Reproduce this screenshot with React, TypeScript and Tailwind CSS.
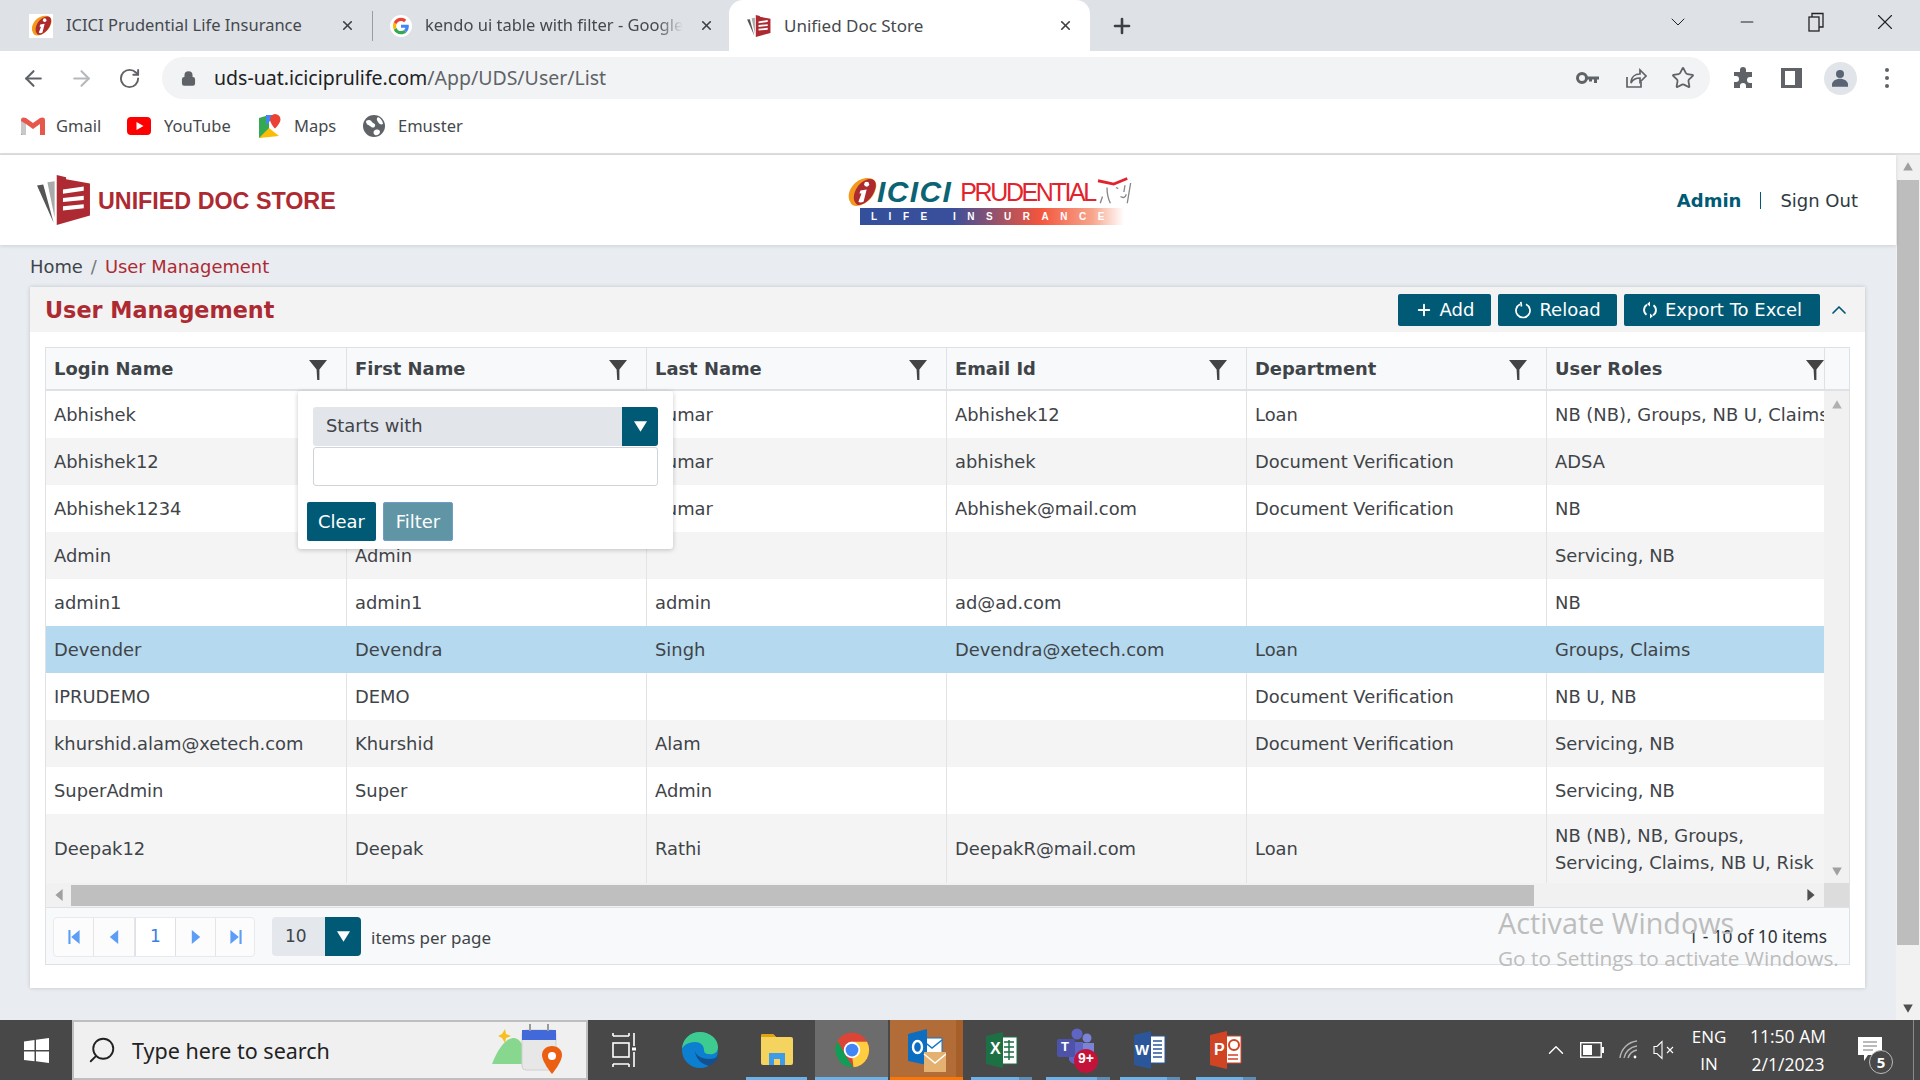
import React from "react";
import { ArrowLeft, ArrowRight, RotateCw, Star, Plus, X, Minus, ChevronDown, ChevronUp, Lock, Search } from "lucide-react";

const rows = [
  ["Abhishek", "Abhishek", "Kumar", "Abhishek12", "Loan", "NB (NB), Groups, NB U, Claims, Risk"],
  ["Abhishek12", "Abhishek", "Kumar", "abhishek", "Document Verification", "ADSA"],
  ["Abhishek1234", "Abhishek", "Kumar", "Abhishek@mail.com", "Document Verification", "NB"],
  ["Admin", "Admin", "", "", "", "Servicing, NB"],
  ["admin1", "admin1", "admin", "ad@ad.com", "", "NB"],
  ["Devender", "Devendra", "Singh", "Devendra@xetech.com", "Loan", "Groups, Claims"],
  ["IPRUDEMO", "DEMO", "", "", "Document Verification", "NB U, NB"],
  ["khurshid.alam@xetech.com", "Khurshid", "Alam", "", "Document Verification", "Servicing, NB"],
  ["SuperAdmin", "Super", "Admin", "", "", "Servicing, NB"],
  ["Deepak12", "Deepak", "Rathi", "DeepakR@mail.com", "Loan", "NB (NB), NB, Groups, Servicing, Claims, NB U, Risk"],
];
const heads = ["Login Name", "First Name", "Last Name", "Email Id", "Department", "User Roles"];

const Funnel = () => (
  <svg width="18" height="20" viewBox="0 0 18 20" className="shrink-0"><path d="M0 0h18l-7.600 9.500V20H8.200L7.600 9.500z" fill="#444" /></svg>
);
const Tri = ({ d, c = "#6b6b6b", s = 10 }: { d: string; c?: string; s?: number }) => (
  <svg width={s} height={s} viewBox="0 0 10 10" className="shrink-0"><path d={d} fill={c} /></svg>
);
const IciciMark = ({ s = 24 }: { s?: number }) => (
  <svg width={s} height={s} viewBox="0 0 30 30" className="shrink-0"><path d="M4 24C-1 16 8 1 21 1c8 0 10 6 7 13-3 8-11 14-18 14-3 0-5-1-6-4z" fill="#f39a1e" /><path d="M8 23C6 15 13 3 23 2c7 0 7 7 4 13-3 7-10 12-15 12-2 0-3-2-4-4z" fill="#ad2a2f" /><circle cx="20" cy="7" r="2.400" fill="#fff" /><path d="M14 13l6-1-3 12c-2 1-4 1-5 0l3-8-2 0z" fill="#fff" /></svg>
);
const UdsMark = ({ w = 52, h = 48 }: { w?: number; h?: number }) => (
  <svg width={w} height={h} viewBox="0 0 52 48" className="shrink-0">
    <path d="M0 10l6-1 10 37z" fill="#555" />
    <path d="M10 7l7-1v35z" fill="#aaa" />
    <path d="M19 0l9 2v2l23 4v31L19 48z" fill="#ad2a32" />
    <path d="M25 14l20-3v4l-20 3zM25 22l20-2v4l-20 2zM25 30l20-2v4l-20 2z" fill="#fff" />
  </svg>
);
const GoogleG = () => (
  <svg width="22" height="22" viewBox="0 0 48 48" className="shrink-0"><circle cx="24" cy="24" r="24" fill="#fff" /><path d="M41 24.500c0-1.300-.1-2.500-.3-3.500H24v7h9.700c-.4 2.200-1.700 4-3.500 5.300l5.500 4.300c3.400-3.100 5.300-7.600 5.300-13.100z" fill="#4285f4" /><path d="M24 42c4.600 0 8.500-1.500 11.700-4.400l-5.500-4.300c-1.600 1-3.700 1.700-6.200 1.700-4.700 0-8.700-3.100-10.100-7.400l-5.700 4.400C11.100 38 17.100 42 24 42z" fill="#34a853" /><path d="M13.900 27.600c-.8-2.300-.8-4.900 0-7.200l-5.700-4.400c-2.400 4.900-2.400 11.100 0 16z" fill="#fbbc05" /><path d="M24 13c2.600 0 4.900.9 6.700 2.600l5-5C32.500 7.700 28.600 6 24 6c-6.900 0-12.900 4-15.800 10l5.700 4.400C15.300 16.100 19.300 13 24 13z" fill="#ea4335" /></svg>
);
const ChromeIcon = () => (
  <svg width="36" height="36" viewBox="0 0 48 48" className="shrink-0"><circle cx="24" cy="24" r="23" fill="#db4437" /><path d="M5 12l12 22 9 13A23 23 0 0 1 5 12z" fill="#0f9d58" /><path d="M44 13H24l-2 0 4 34A23 23 0 0 0 44 13z" fill="#ffcd40" /><circle cx="24" cy="24" r="11" fill="#fff" /><circle cx="24" cy="24" r="8.500" fill="#4285f4" /></svg>
);
const EdgeIcon = () => (
  <svg width="38" height="38" viewBox="0 0 38 38" className="shrink-0"><circle cx="19" cy="19" r="18" fill="#0c7fd0" /><path d="M1 19C1 8 9 1 19 1c10 0 18 7 18 15 0 6-5 8-9 7-4 0-5-2-5-4 0-5-4-8-9-8-7 0-13 4-13 8z" fill="#3ecb8f" /><path d="M14 19c0 8 6 14 14 16 6-3 9-7 9-10-2 2-5 3-9 3-6 0-14-3-14-9z" fill="#154f8d" /></svg>
);
const ReloadIcon = () => (
  <svg width="18" height="18" viewBox="0 0 18 18" fill="none" stroke="#fff" strokeWidth="1.700" className="shrink-0"><path d="M6 3.200A7 7 0 1 0 12 3.200" /><path d="M6.800 0.800L7.500 5.500" /></svg>
);
const ExportIcon = () => (
  <svg width="16" height="18" viewBox="0 0 16 18" fill="none" stroke="#fff" strokeWidth="1.900" className="shrink-0"><path d="M5 3.800a6 6 0 0 0-.5 10M11 14.200a6 6 0 0 0 .5-10" /><path d="M8 0.500v5l-3-2.500zM8 17.500v-5l3 2.500z" fill="#fff" stroke="none" /></svg>
);
const TabClose = () => <X size={15} strokeWidth={2.600} color="#3c4043" className="shrink-0" />;

function Cell({ w, children, className = "" }: { w: number; children?: React.ReactNode; className?: string }) {
  return <span style={{ width: w }} className={`flex justify-center items-center shrink-0 ${className}`}>{children}</span>;
}

function TopChrome() {
  return (
    <div className="shrink-0 font-['Noto_Sans','Open_Sans',sans-serif] text-[#45494d]">
      <div className="h-[51px] bg-[#dee1e6] flex items-center">
        <div className="flex items-center w-[372px] shrink-0">
          <Cell w={66} className="pl-[20px] pr-[4px]"><span className="w-[24px] h-[24px] bg-white flex items-center justify-center"><IciciMark s={22} /></span></Cell>
          <span className="w-[274px] text-[16.500px] whitespace-nowrap overflow-hidden">ICICI Prudential Life Insurance</span>
          <TabClose />
        </div>
        <div className="w-px h-[30px] bg-[#9a9da2] shrink-0" />
        <div className="flex items-center w-[356px] shrink-0">
          <Cell w={52} className="pl-[10px] pr-[6px]"><GoogleG /></Cell>
          <span className="w-[258px] text-[16.500px] whitespace-nowrap overflow-hidden [mask-image:linear-gradient(to_right,#000_90%,transparent)]">kendo ui table with filter - Google Search</span>
          <span className="w-[16px]" />
          <TabClose />
        </div>
        <div className="w-[361px] h-[51px] bg-white rounded-t-[14px] flex items-center shrink-0">
          <Cell w={55} className="pl-[17px] pr-[12px]"><UdsMark w={24} h={22} /></Cell>
          <span className="w-[274px] text-[17px]">Unified Doc Store</span>
          <TabClose />
        </div>
        <Cell w={64}><Plus size={24} strokeWidth={2.600} color="#3c4043" /></Cell>
        <div className="flex-1" />
        <div className="flex items-center self-start h-[44px] text-[#222] pr-[1px]">
          <Cell w={69}><ChevronDown size={24} strokeWidth={1} /></Cell>
          <Cell w={69}><Minus size={20} strokeWidth={1.400} /></Cell>
          <Cell w={69}>
            <svg width="18" height="20" viewBox="0 0 18 20" fill="none" stroke="#222" strokeWidth="1.300"><rect x="2" y="5" width="10" height="14" /><path d="M5 5V1.500h11V15h-4" /></svg>
          </Cell>
          <Cell w={69}><X size={26} strokeWidth={1} /></Cell>
        </div>
      </div>
      <div className="h-[48px] pt-[6px] bg-white flex items-center text-[#5f6368]">
        <Cell w={66}><ArrowLeft size={25} strokeWidth={2} /></Cell>
        <Cell w={30} className="text-[#b5b8bc]"><ArrowRight size={25} strokeWidth={2} /></Cell>
        <Cell w={66}><RotateCw size={23} strokeWidth={2} /></Cell>
        <div className="w-[1548px] h-[42px] bg-[#f1f3f4] rounded-full flex items-center shrink-0">
          <Cell w={52}><Lock size={15} strokeWidth={3} fill="#5f6368" /></Cell>
          <span className="text-[19.500px] text-[#202124] whitespace-nowrap">uds-uat.iciciprulife.com<span className="text-[#5f6368]">/App/UDS/User/List</span></span>
          <div className="flex-1" />
          <Cell w={48}><svg width="23" height="14" viewBox="0 0 23 14"><circle cx="6" cy="7" r="4.500" fill="none" stroke="#5f6368" strokeWidth="3" /><path d="M10 5.500h13v3h-2v3.500h-3V8.500h-2v2h-3V8.500h-3z" fill="#5f6368" /></svg></Cell>
          <Cell w={48}><svg width="24" height="24" viewBox="0 0 24 24" fill="none" stroke="#5f6368" strokeWidth="1.700"><path d="M4 11v10h14v-5" /><path d="M8 17c0-6 4-9 9-9V4l6 6-6 6v-4c-4 0-7 1-9 5z" /></svg></Cell>
          <Cell w={48}><Star size={24} strokeWidth={1.800} /></Cell>
          <span className="w-[3px]" />
        </div>
        <Cell w={58} className="pl-[8px]"><svg width="24" height="24" viewBox="0 0 24 24" fill="#5f6368"><path d="M9 4a3 3 0 0 1 6 0v2h6v5h-2a3 3 0 0 0 0 6h2v5h-6v-2a3 3 0 0 0-6 0v2H3v-6h2a3 3 0 0 0 0-6H3V6h6z" /></svg></Cell>
        <Cell w={46}><svg width="21" height="24" viewBox="0 0 21 24"><path d="M0 2h21v20H0zM4 5v14h10V5z" fill="#5f6368" fillRule="evenodd" /></svg></Cell>
        <Cell w={52}><span className="w-[33px] h-[33px] rounded-full bg-[#e1e4e9] flex items-center justify-center"><svg width="16" height="20" viewBox="0 0 20 22" fill="#5a6474"><circle cx="10" cy="6" r="5" /><path d="M0 22v-3c0-4 5-7 10-7s10 3 10 7v3z" /></svg></span></Cell>
        <span className="flex flex-col gap-[4px] items-center w-[42px] shrink-0">
          <i className="w-[4px] h-[4px] rounded-full bg-[#5f6368]" /><i className="w-[4px] h-[4px] rounded-full bg-[#5f6368]" /><i className="w-[4px] h-[4px] rounded-full bg-[#5f6368]" />
        </span>
      </div>
      <div className="h-[56px] bg-white flex items-center pl-[21px] border-b-2 border-[#dfdfdf] text-[16.500px]">
        <svg width="24" height="18" viewBox="0 0 24 18" className="shrink-0"><path d="M0 3v15h5V7l7 5 7-5v11h5V3c0-3-3-3-5-2l-7 5-7-5C3 0 0 0 0 3z" fill="#e6584c" /><path d="M5 7v11H1.500C.500 18 0 17 0 16V4z" fill="#c8c8c8" /></svg>
        <span className="w-[84px] pl-[11px] whitespace-nowrap">Gmail</span>
        <svg width="24" height="18" viewBox="0 0 24 18" className="shrink-0 -ml-[2px]"><rect width="24" height="18" rx="4" fill="#f00" /><path d="M9.500 5l7 4-7 4z" fill="#fff" /></svg>
        <span className="w-[109px] pl-[13px] whitespace-nowrap">YouTube</span>
        <svg width="22" height="24" viewBox="0 0 22 24" className="shrink-0 -ml-[1px]"><path d="M0 4l10-3v20L0 24z" fill="#34a853" /><path d="M0 24l10-10 10 8z" fill="#fbbc05" /><path d="M7 1l10 0-10 10z" fill="#4285f4" /><path d="M16 0a5.500 5.500 0 0 1 5.500 5.500c0 4-5.500 9-5.500 9s-5-5-5-9A5.500 5.500 0 0 1 16 0z" fill="#ea4335" /></svg>
        <span className="w-[82px] pl-[13px] whitespace-nowrap">Maps</span>
        <svg width="22" height="22" viewBox="0 0 22 22" className="shrink-0"><circle cx="11" cy="11" r="11" fill="#5f6368" /><path d="M3 6c3-2 5-1 6 1s4 1 3 4-4 1-5 0-4-1-4-5zM15 2c2 1 5 4 5 7-2 1-4 0-5-2s-2-3 0-5zM12 15c3-1 5 0 5 2s-3 4-5 3-2-4 0-5z" fill="#fff" /></svg>
        <span className="pl-[13px] whitespace-nowrap">Emuster</span>
      </div>
    </div>
  );
}

function Header() {
  return (
    <div className="h-[90px] bg-white flex items-center shrink-0 shadow-[0_1px_4px_rgba(0,0,0,0.12)] relative">
      <div className="w-[846px] shrink-0 pl-[37px] flex items-center gap-[7px]">
        <UdsMark w={54} h={50} />
        <span className="font-['Liberation_Sans',sans-serif] font-bold text-[23.300px] text-[#ad2a32] whitespace-nowrap pt-[3px]">UNIFIED DOC STORE</span>
      </div>
      <div className="w-[294px] shrink-0 flex flex-col items-start">
        <div className="flex items-center h-[34px]">
          <IciciMark s={31} />
          <span className="font-['Liberation_Sans',sans-serif] font-bold italic text-[30px] tracking-[1.400px] text-[#0b6374] leading-none whitespace-nowrap">ICICI</span>
          <span className="font-['Liberation_Sans',sans-serif] text-[25px] tracking-[-2.400px] text-[#e2232e] leading-none ml-[8px] whitespace-nowrap">PRUDENTIAL</span>
          <svg width="42" height="36" viewBox="0 0 36 32" fill="none" stroke="#888" strokeWidth="1.200" className="shrink-0"><path d="M2 6l14 3 12-5" stroke="#e2232e" strokeWidth="2.500" /><path d="M10 12c0 6 1 10 3 14M18 12l2 1M26 10l-1 6M22 20c3 2 5 0 5-2M31 8l-3 18M6 20l-2 6" /></svg>
        </div>
        <div className="w-[264px] h-[17px] ml-[14px] -mt-[1px] bg-[linear-gradient(90deg,#34509b_0%,#3a4f9b_35%,#f2553c_68%,#f7a58c_88%,#ffffff_100%)] flex items-center pl-[11px] text-white text-[10px] font-bold font-['Liberation_Sans',sans-serif] tracking-[11.500px] whitespace-nowrap overflow-hidden">LIFE INSURANCE</div>
      </div>
      <div className="flex-1 flex items-center justify-end pr-[38px] font-['DejaVu_Sans',sans-serif] text-[18px]">
        <span className="font-bold text-[#005a75]">Admin</span>
        <span className="w-px h-[17px] bg-[#005a75] mx-[19px]" />
        <span className="text-[#2e3b42]">Sign Out</span>
      </div>
    </div>
  );
}

function Btn({ w, icon, label }: { w: number; icon: React.ReactNode; label: string }) {
  return (
    <span style={{ width: w }} className="h-[32px] rounded-[2px] bg-[#005a75] text-white flex items-center justify-center gap-[7px] text-[18px] shrink-0 whitespace-nowrap">
      {icon}{label}
    </span>
  );
}

function Grid() {
  const cols = "grid grid-cols-[301px_300px_300px_300px_300px_277px]";
  return (
    <div className="w-[1805px] h-[618px] border border-[#dee2e6] relative flex flex-col bg-white text-[#3f4449]">
      <div className="flex h-[43px] border-b-2 border-[#dee2e6] bg-[#f8f9fa] shrink-0">
        <div className={`${cols} w-[1778px]`}>
          {heads.map((h, i) => (
            <div key={h} className={`flex items-center justify-between pt-[2px] pl-[8px] ${i === 5 ? "pr-0 overflow-hidden" : "pr-[19px] border-r border-[#dee2e6]"}`}>
              <span className="font-bold text-[#3f4449] whitespace-nowrap">{h}</span><Funnel />
            </div>
          ))}
        </div>
        <div className="flex-1 border-l border-[#dee2e6]" />
      </div>
      <div className="flex h-[492px] shrink-0">
        <div className="w-[1778px] shrink-0">
          {rows.map((r, idx) => (
            <div key={idx} className={`${cols} ${idx === 9 ? "h-[69px]" : "h-[47px]"} ${idx === 5 ? "bg-[#b5d9ef]" : [1, 3, 7, 9].includes(idx) ? "bg-[#f4f4f4]" : "bg-white"}`}>
              {r.map((c, j) => (
                <div key={j} className={`flex items-center pt-[1px] pl-[8px] ${j < 5 ? "border-r" : ""} ${idx === 5 ? "border-[#b5d9ef]" : "border-[#e3e3e3]"} ${idx === 9 && j === 5 ? "leading-[27px]" : "whitespace-nowrap overflow-hidden"}`}>
                  <span className={idx === 9 && j === 5 ? "" : "whitespace-nowrap"}>{c}</span>
                </div>
              ))}
            </div>
          ))}
        </div>
        <div className="flex-1 bg-[#f1f1f1] flex flex-col items-center justify-between pt-[8px] pb-[6px]">
          <Tri d="M5 1l4 7H1z" c="#b0b0b0" s={12} />
          <Tri d="M1 2h8L5 9z" c="#a0a0a0" s={12} />
        </div>
      </div>
      <div className="flex h-[25px] shrink-0 border-b border-[#dee2e6]">
        <div className="w-[1778px] bg-[#f1f1f1] flex items-center shrink-0">
          <Cell w={25}><Tri d="M8 0v10L2 5z" c="#a0a0a0" s={12} /></Cell>
          <div className="w-[1463px] h-[21px] bg-[#bfbfbf] shrink-0" />
          <div className="flex-1" />
          <Cell w={26}><Tri d="M2 0v10l6-5z" c="#505050" s={12} /></Cell>
        </div>
        <div className="flex-1 bg-[#dcdcdc]" />
      </div>
      <div className="flex-1 bg-[#f8f9fa] flex items-center pl-[7px] pr-[22px] pt-[1px]">
        <div className="h-[40px] w-[202px] bg-[#fcfcfd] border border-[#e8eaed] rounded-[4px] flex shrink-0 divide-x divide-[#e3e5e8]">
          <Cell w={40}><Tri d="M1 0h1.500v10H1zM9 0v10L3 5z" c="#5c9df5" s={14} /></Cell>
          <Cell w={41}><Tri d="M8 0v10L2 5z" c="#5c9df5" s={14} /></Cell>
          <Cell w={41} className="bg-white text-[#3d7fe0] border-x border-[#dee2e6] text-[17px]">1</Cell>
          <Cell w={40}><Tri d="M2 0v10l6-5z" c="#5c9df5" s={14} /></Cell>
          <Cell w={39}><Tri d="M9 0H7.500v10H9zM1 0v10l6-5z" c="#5c9df5" s={14} /></Cell>
        </div>
        <div className="ml-[17px] h-[39px] w-[89px] rounded-[4px] overflow-hidden flex shrink-0">
          <span className="flex-1 bg-[#e4e7ec] flex items-center pl-[13px] text-[17px] pt-[1px]">10</span>
          <Cell w={36} className="bg-[#005a75]"><Tri d="M0 1h10L5 9z" c="#fff" s={13} /></Cell>
        </div>
        <span className="ml-[10px] text-[17px] font-['Noto_Sans',sans-serif] pt-[3px]">items per page</span>
        <div className="flex-1" />
        <span className="text-[17.300px] font-['Noto_Sans',sans-serif] text-[#2e3338] pt-[1px]">1 - 10 of 10 items</span>
      </div>

      <div className="absolute left-[252px] top-[43px] w-[375px] h-[158px] bg-white rounded-[3px] shadow-[0_1px_5px_rgba(0,0,0,0.22)] px-[15px] pt-[16px] z-10">
        <div className="h-[39px] rounded-[3px] bg-[#e2e5ea] flex overflow-hidden">
          <span className="flex-1 flex items-center pl-[13px]">Starts with</span>
          <Cell w={36} className="bg-[#005a75]"><Tri d="M0 1h10L5 9z" c="#fff" s={13} /></Cell>
        </div>
        <div className="h-[39px] mt-[1px] bg-white border border-[#ced4da] rounded-[3px]" />
        <div className="flex gap-[7px] mt-[16px] -ml-[6px]">
          <span className="w-[69px] h-[39px] bg-[#005a75] text-white rounded-[2px] flex items-center justify-center pt-[1px]">Clear</span>
          <span className="w-[70px] h-[39px] bg-[#6095a5] text-white rounded-[2px] border border-[#6f9dc9] flex items-center justify-center font-medium pt-[1px]">Filter</span>
        </div>
      </div>

      <div className="absolute left-[1452px] top-[557px] text-[#bdbdbd] font-['Open_Sans',sans-serif] pointer-events-none z-20 whitespace-nowrap">
        <div className="text-[28.800px] leading-[36px]">Activate Windows</div>
        <div className="text-[20.800px] leading-[28px] mt-[3px]">Go to Settings to activate Windows.</div>
      </div>
    </div>
  );
}

function Main() {
  return (
    <div className="flex flex-1 min-h-0">
      <div className="flex-1 min-w-0 flex flex-col bg-[#e9ecf1] font-['DejaVu_Sans',sans-serif] text-[17.900px]">
        <Header />
        <div className="h-[42px] flex items-center pl-[30px] gap-[8px] shrink-0 text-[#3f4449] pt-[2px]">
          <span>Home</span><span className="text-[#777]">/</span><span className="text-[#ad2a32]">User Management</span>
        </div>
        <div className="w-[1835px] ml-[30px] h-[701px] bg-white shadow-[0_0_4px_rgba(0,0,0,0.18)] flex flex-col shrink-0">
          <div className="h-[45px] bg-[#f3f3f3] flex items-center pl-[15px] pr-[7px] shrink-0">
            <span className="font-bold text-[22.300px] text-[#ad2a32] whitespace-nowrap pt-[2px]">User Management</span>
            <div className="flex-1" />
            <div className="flex items-center gap-[7px]">
              <Btn w={93} label="Add" icon={<Plus size={18} strokeWidth={2.500} />} />
              <Btn w={119} label="Reload" icon={<ReloadIcon />} />
              <Btn w={196} label="Export To Excel" icon={<ExportIcon />} />
            </div>
            <Cell w={38} className="text-[#005a75]"><ChevronUp size={24} strokeWidth={1.700} /></Cell>
          </div>
          <div className="pl-[15px] pt-[15px]"><Grid /></div>
        </div>
      </div>
      <div className="w-[24px] shrink-0 bg-[#f1f1f1] flex flex-col items-center pt-[6px]">
        <Tri d="M5 1l4 7H1z" c="#a0a0a0" s={12} />
        <div className="w-[22px] h-[765px] bg-[#bdbdbd] mt-[7px] shrink-0" />
        <div className="flex-1" />
        <div className="pb-[6px]"><Tri d="M1 2h8L5 9z" c="#505050" s={12} /></div>
      </div>
    </div>
  );
}

function TaskApp({ w, bar, bg, dim, children }: { w: number; bar?: string; bg?: string; dim?: boolean; children: React.ReactNode }) {
  return (
    <div style={{ width: w, background: bg }} className="h-[60px] relative flex items-center justify-center shrink-0">
      {children}
      {bar && <span style={{ background: bar }} className="absolute bottom-0 left-0 right-0 h-[3px]" />}
      {dim && <span className="absolute bottom-0 right-0 w-[13px] h-[3px] bg-[#5d8db5]" />}
    </div>
  );
}

function Taskbar() {
  const bar = "#6eb0e8";
  return (
    <div className="h-[60px] shrink-0 bg-[#484848] flex items-center font-['Open_Sans',sans-serif] text-white">
      <Cell w={72}>
        <svg width="25" height="25" viewBox="0 0 25 25" fill="#fff"><path d="M0 3.500l10.500-1.500v10H0zM12 1.800L25 0v12H12zM0 13.500h10.500v9.800L0 22zM12 13.500h13V25l-13-1.800z" /></svg>
      </Cell>
      <div className="w-[516px] h-[60px] bg-[#f0f0f0] border-2 border-[#bfbfbf] flex items-center shrink-0">
        <Cell w={56}><Search size={30} strokeWidth={1.500} color="#222" className="-scale-x-100" /></Cell>
        <span className="text-[21.500px] text-[#222] font-['Noto_Sans',sans-serif] whitespace-nowrap pt-[3px] pl-[2px]">Type here to search</span>
        <div className="flex-1" />
        <svg width="76" height="52" viewBox="0 0 76 52" className="shrink-0 mr-[18px]">
          <path d="M0 40C8 20 16 14 22 14s12 10 14 26z" fill="#88d78e" />
          <path d="M10 10l3-5 1 5 5 2-5 2-1 5-3-5-4-2z" fill="#f8bf1f" />
          <rect x="30" y="6" width="34" height="40" rx="4" fill="#e7e7e7" stroke="#cfcfcf" />
          <path d="M30 6h34v10H30z" fill="#4169d9" />
          <path d="M38 0v7M56 0v7" stroke="#9a9a9a" strokeWidth="2" />
          <path d="M60 22c6 0 10 4 10 9 0 7-10 19-10 19s-10-12-10-19c0-5 4-9 10-9z" fill="#ea5f12" />
          <circle cx="60" cy="32" r="4" fill="#fff" />
        </svg>
      </div>
      <Cell w={72}>
        <svg width="24" height="36" viewBox="0 0 24 36" fill="none" stroke="#fff" strokeWidth="1.600"><path d="M1 4h16M1 32h16M1 1v3M17 1v3M1 32v3M17 32v3" /><rect x="1" y="11" width="16" height="14" /><path d="M22 1v13M22 20v15" /><rect x="20" y="15.500" width="4" height="3" fill="#fff" stroke="none" /></svg>
      </Cell>
      <TaskApp w={80}><EdgeIcon /></TaskApp>
      <div className="w-[6px]" />
      <TaskApp w={61} bar={bar}>
        <svg width="32" height="34" viewBox="0 0 32 34" className="shrink-0"><path d="M0 3a2 2 0 0 1 2-2h10l3 3h15a2 2 0 0 1 2 2v24a2 2 0 0 1-2 2H2a2 2 0 0 1-2-2z" fill="#f5d35f" /><path d="M0 3a2 2 0 0 1 2-2h10l3 3H0z" fill="#e2a30f" /><path d="M8 20h16v12h-5v-6h-6v6H8z" fill="#3d9be9" /></svg>
      </TaskApp>
      <div className="w-[8px]" />
      <TaskApp w={73} bar={bar} bg="#6c6c6c"><ChromeIcon /></TaskApp>
      <div className="w-[2px]" />
      <TaskApp w={73} bar="#f97707" bg="#b26c38">
        <span className="absolute right-0 top-0 bottom-0 w-[7px] bg-[#a75f2a]" />
        <svg width="38" height="44" viewBox="0 0 38 44" className="shrink-0 relative"><path d="M14 10h20v22H14z" fill="#fff" stroke="#1075cb" /><path d="M14 12l10 8 10-8" fill="none" stroke="#1075cb" strokeWidth="1.500" /><path d="M0 6l19-5v36L0 33z" fill="#0d6ec1" /><ellipse cx="9.500" cy="19" rx="4.500" ry="6" fill="none" stroke="#fff" strokeWidth="2.400" /><rect x="16" y="24" width="22" height="20" fill="#e5b170" /><path d="M16 26l11 9 11-9" fill="none" stroke="#fff" strokeWidth="1.500" /></svg>
      </TaskApp>
      <div className="w-[8px]" />
      <TaskApp w={61} bar={bar} dim>
        <svg width="32" height="36" viewBox="0 0 32 36" className="shrink-0"><path d="M14 5h17v27H14z" fill="#fff" stroke="#1d7044" /><path d="M18 10h10M18 15h10M18 20h10M18 25h10M23 8v20" stroke="#1d7044" strokeWidth="1.500" /><path d="M0 4l17-4v36L0 32z" fill="#1d7044" /></svg>
        <span className="absolute left-[19px] top-[18px] text-[16px] font-bold leading-[22px] font-['Liberation_Sans',sans-serif]">X</span>
      </TaskApp>
      <div className="w-[14px]" />
      <TaskApp w={64} bar={bar} dim>
        <svg width="42" height="46" viewBox="0 0 42 46" className="shrink-0"><circle cx="20" cy="7" r="5.500" fill="#5f65c5" /><circle cx="30" cy="11" r="4.500" fill="#7b83d6" /><path d="M24 16h13v14a8 8 0 0 1-16 0z" fill="#7b83d6" /><path d="M12 15h14v18a8 8 0 0 1-14 0z" fill="#5f65c5" /><rect x="0" y="12" width="18" height="18" rx="2" fill="#4d53a8" /><circle cx="29" cy="34" r="12" fill="#c4133a" /></svg>
        <span className="absolute left-[15px] top-[20px] text-[13px] font-bold leading-[14px] font-['Liberation_Sans',sans-serif]">T</span>
        <span className="absolute left-[32px] top-[30px] text-[14px] font-bold leading-[16px] font-['Liberation_Sans',sans-serif]">9+</span>
      </TaskApp>
      <div className="w-[10px]" />
      <TaskApp w={60} bar={bar} dim>
        <svg width="32" height="38" viewBox="0 0 32 38" className="shrink-0"><path d="M13 5h18v27H13z" fill="#fff" stroke="#2b579a" /><path d="M19 10h9M19 14h9M19 18h9M19 22h9M19 26h9" stroke="#2b579a" strokeWidth="1.500" /><path d="M0 4l17-4v38L0 34z" fill="#2b579a" /></svg>
        <span className="absolute left-[15px] top-[20px] text-[15px] font-bold leading-[20px] font-['Liberation_Sans',sans-serif]">W</span>
      </TaskApp>
      <div className="w-[16px]" />
      <TaskApp w={60} bar={bar} dim>
        <svg width="32" height="38" viewBox="0 0 32 38" className="shrink-0"><path d="M13 5h18v27H13z" fill="#fff" stroke="#d04423" /><circle cx="24" cy="14" r="5" fill="none" stroke="#d04423" strokeWidth="2" /><path d="M18 24h10M18 28h10" stroke="#d04423" strokeWidth="1.500" /><path d="M0 4l17-4v38L0 34z" fill="#d04423" /></svg>
        <span className="absolute left-[18px] top-[20px] text-[16px] font-bold leading-[20px] font-['Liberation_Sans',sans-serif]">P</span>
      </TaskApp>
      <div className="flex-1" />
      <Cell w={36}><ChevronUp size={26} strokeWidth={1.300} /></Cell>
      <Cell w={36}><svg width="24" height="16" viewBox="0 0 24 16" fill="none"><rect x=".7" y=".7" width="20.500" height="14.500" stroke="#fff" strokeWidth="1.400" /><rect x="3" y="3" width="9" height="10" fill="#fff" /><rect x="22" y="5" width="2" height="6" fill="#fff" /></svg></Cell>
      <Cell w={37}><svg width="20" height="20" viewBox="0 0 20 20" fill="none" stroke="#b5b5b5" strokeWidth="1.400"><path d="M1 18C2 9 9 2 18 1M5 18c1-6 6-11 13-12M9 18c1-3 4-7 9-8" /><circle cx="16" cy="17" r="1.400" fill="#fff" stroke="none" /></svg></Cell>
      <Cell w={33}><svg width="22" height="20" viewBox="0 0 22 20" fill="none" stroke="#fff" strokeWidth="1.100"><path d="M1 6.500h3L9 1.500v17L4 13.500H1zM14 7l6 6M20 7l-6 6" /></svg></Cell>
      <div className="w-[58px] flex flex-col items-center text-[17px] leading-[27px] shrink-0"><span>ENG</span><span>IN</span></div>
      <div className="w-[100px] flex flex-col items-center text-[17.500px] leading-[28px] shrink-0"><span>11:50 AM</span><span>2/1/2023</span></div>
      <div className="w-[50px] h-[60px] relative flex items-center justify-center shrink-0 ml-[7px] mr-[18px]">
        <svg width="24" height="26" viewBox="0 0 24 26"><path d="M0 0h24v18H10l-4 6v-6H0z" fill="#fff" /><path d="M5 5h14M5 9h14M5 13h10" stroke="#777" strokeWidth="1" /></svg>
        <span className="absolute left-[24px] top-[30px] w-[24px] h-[24px] rounded-full bg-[#484848] border border-[#bbb] flex items-center justify-center text-[15px] font-bold leading-none">5</span>
      </div>
      <div className="w-px h-[60px] bg-[#8a8a8a] shrink-0" />
      <span className="w-[6px]" />
    </div>
  );
}

export default function App() {
  return (
    <div className="w-[1920px] h-[1080px] overflow-hidden bg-white flex flex-col">
      <TopChrome />
      <Main />
      <Taskbar />
    </div>
  );
}
